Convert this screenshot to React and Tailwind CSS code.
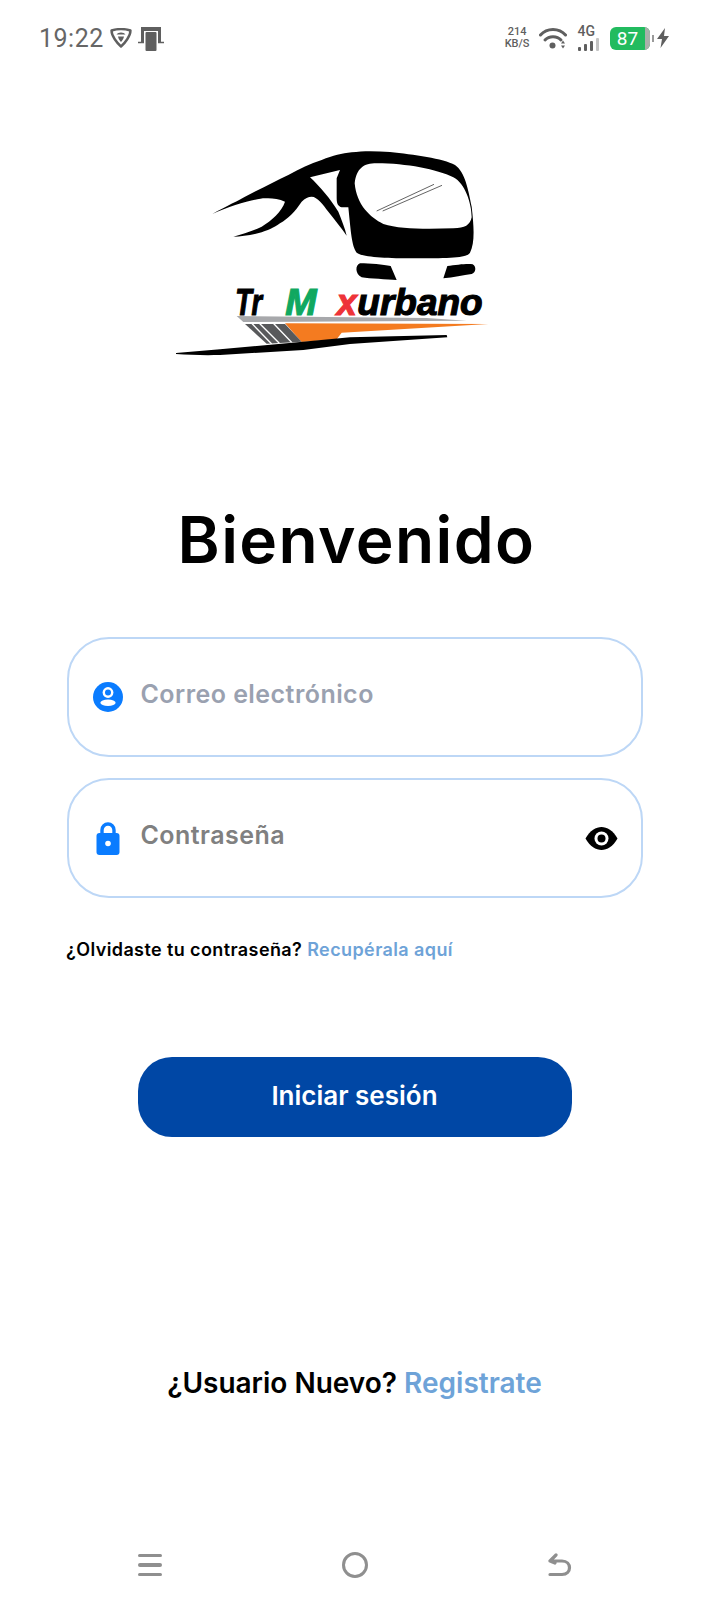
import { useId } from "react"

function ShieldIcon() {
  return (
    <svg width="22" height="20" viewBox="0 0 22 20" fill="none">
      <path d="M1.5 2.5 C7 0.8 15 0.8 20.5 2.5 C20.5 8 15 15 11 18.5 C7 15 1.5 8 1.5 2.5 Z" stroke="#5f5f5f" strokeWidth="2.4" strokeLinejoin="round" />
      <path d="M6.5 6.5 C8 3.8 14 3.8 15.5 6.5 Z M8 8.5 H14 C13.6 11 12 13 11 14 C10 13 8.4 11 8 8.5 Z" fill="#5f5f5f" />
    </svg>
  )
}

function DeviceIcon() {
  return (
    <svg width="26" height="25" viewBox="0 0 26 25" fill="none">
      <path d="M3 1 H23 V16 H20 V5 H6 V16 H3 Z" fill="#5f5f5f" />
      <rect x="7.5" y="6" width="11" height="19" rx="1" fill="#5f5f5f" />
      <path d="M0 16.5 H6 M20 16.5 H26" stroke="#5f5f5f" strokeWidth="1.5" />
    </svg>
  )
}

function WifiIcon() {
  return (
    <svg width="28" height="22" viewBox="0 0 28 22" fill="none">
      <path d="M1.5 8 C8 0.5 20 0.5 26.5 8" stroke="#5f5f5f" strokeWidth="3" strokeLinecap="round" />
      <path d="M6 13 C10 8.5 18 8.5 22 13" stroke="#5f5f5f" strokeWidth="3" strokeLinecap="round" />
      <circle cx="13.5" cy="18.5" r="3" fill="#5f5f5f" />
      <path d="M24 13.5 L26 16.5 H22 Z M24 21.5 L26 18.5 H22 Z" fill="#5f5f5f" />
    </svg>
  )
}

function SignalIcon() {
  return (
    <div className="flex flex-col items-start">
      <span className="text-[14px] leading-[11px] font-medium text-[#5f5f5f] font-['Roboto',sans-serif]">4G</span>
      <div className="flex items-end gap-[2.5px] h-[13px] mt-[1px]">
        <span className="w-[3.5px] h-[4px] bg-[#5f5f5f] rounded-[1px]" />
        <span className="w-[3.5px] h-[7px] bg-[#5f5f5f] rounded-[1px]" />
        <span className="w-[3.5px] h-[10px] bg-[#5f5f5f] rounded-[1px]" />
        <span className="w-[3.5px] h-[13px] bg-[#c4c4c4] rounded-[1px]" />
      </div>
    </div>
  )
}

function Battery() {
  return (
    <div className="flex items-center">
      <div className="flex items-center w-[40px] h-[23px] rounded-[6px] bg-[#22bb5f] overflow-hidden">
        <span className="flex-1 text-center text-white text-[19px] leading-none font-['Roboto',sans-serif]">87</span>
        <span className="w-[5px] h-full bg-[#a9b0aa]" />
      </div>
      <span className="ml-[2px] w-[2px] h-[7px] bg-[#9a9a9a]" />
      <svg className="ml-[2px]" width="14" height="20" viewBox="0 0 14 20">
        <path d="M9 0 L1 11 H6 L4.5 20 L13 8 H8 Z" fill="#5f5f5f" />
      </svg>
    </div>
  )
}

function StatusBar() {
  return (
    <div className="h-[76px] flex items-center justify-between pl-[39px] pr-[39px] font-['Roboto',sans-serif]">
      <div className="flex items-center">
        <span className="text-[25px] leading-none tracking-[0.5px] text-[#666666]">19:22</span>
        <span className="ml-[6px] flex"><ShieldIcon /></span>
        <span className="ml-[6px] flex"><DeviceIcon /></span>
      </div>
      <div className="flex items-center">
        <div className="flex flex-col items-center text-[11px] leading-[12px] font-medium text-[#5f5f5f]">
          <span>214</span>
          <span>KB/S</span>
        </div>
        <span className="ml-[9px] flex"><WifiIcon /></span>
        <span className="ml-[11px] flex"><SignalIcon /></span>
        <span className="ml-[11px] flex"><Battery /></span>
      </div>
    </div>
  )
}

// bus logo, traced in 3x coordinates
function Logo() {
  return (
    <svg className="ml-[160px] block" width="340" height="240" viewBox="0 0 1020 720">
      <path
        fill="#000"
        d="M157 252 C200 228 235 212 265 195 C310 172 350 152 385 135 C420 115 450 102 485 90 C520 76 545 70 575 67 C610 62 650 63 690 66 C760 74 850 85 885 105 C915 125 925 180 935 230 C942 290 945 340 930 368 C920 385 860 385 760 385 C680 385 610 382 590 368 C575 350 572 300 565 232 L545 232 C535 230 530 222 530 205 L530 145 L540 120 L450 142 C480 170 510 205 535 245 C545 270 555 295 560 317 C545 295 525 270 505 245 C490 225 472 200 455 200 C445 200 435 205 425 215 C405 245 385 265 360 280 C340 295 320 302 305 307 C275 315 245 319 220 320 C250 312 280 302 305 290 C335 272 365 245 375 215 C355 205 330 204 315 205 C290 205 215 225 157 252 Z"
      />
      <path
        fill="#fff"
        d="M584 160 C590 115 610 100 650 100 C740 100 830 118 880 142 C915 160 935 220 935 262 C930 285 915 295 880 295 C800 298 720 298 670 282 C630 262 590 225 584 160 Z"
      />
      <path d="M650 243 L822 163 M668 243 L846 166" stroke="#444" strokeWidth="2.5" />
      <path fill="#000" d="M600 400 C630 400 670 404 692 408 L710 450 C680 448 630 446 605 442 C585 432 585 405 600 400 Z" />
      <path fill="#000" d="M862 408 C890 404 925 400 938 403 C950 410 948 428 935 432 C910 436 880 442 850 445 Z" />
      <g fontFamily="'Liberation Sans', sans-serif" fontWeight="700" fontStyle="italic" fontSize="110" strokeWidth="3.5">
        <text x="226" y="555" fill="#000" stroke="#000" textLength="80" lengthAdjust="spacingAndGlyphs">Tr</text>
        <text x="376" y="555" fill="#10a860" stroke="#10a860" textLength="94" lengthAdjust="spacingAndGlyphs">M</text>
        <text x="530" y="555" fill="#ee3338" stroke="#ee3338" textLength="60" lengthAdjust="spacingAndGlyphs">x</text>
        <text x="592" y="555" fill="#000" stroke="#000" textLength="376" lengthAdjust="spacingAndGlyphs">urbano</text>
      </g>
      <path fill="#a7a8ab" d="M230 558 L800 564 L920 572 L250 576 Z" />
      <path fill="#f47b20" d="M375 580 L985 582 L545 608 L530 628 L425 636 Z" />
      <path fill="#58595b" d="M255 582 L375 582 L425 635 L320 641 Z" />
      <path stroke="#fff" strokeWidth="4" d="M275 580 L335 642 M298 580 L358 640 M340 580 L396 638" />
      <path fill="#000" d="M48 669 L180 658 L420 636 L570 622 L860 615 L862 622 L570 642 L430 660 L180 675 C130 676 90 675 48 672 Z" />
    </svg>
  )
}

function UserIcon() {
  const id = useId()
  return (
    <svg width="30" height="30" viewBox="0 0 30 30">
      <mask id={id}>
        <rect width="30" height="30" fill="#fff" />
        <circle cx="15" cy="10.5" r="5.4" fill="#000" />
        <ellipse cx="15" cy="20.8" rx="7.6" ry="3.2" fill="#000" />
      </mask>
      <circle cx="15" cy="15" r="15" fill="#0a7cff" mask={`url(#${id})`} />
      <circle cx="15" cy="10.5" r="3" fill="#0a7cff" />
    </svg>
  )
}

function LockIcon() {
  return (
    <svg width="24" height="33" viewBox="0 0 24 33">
      <path d="M6 13 V8 a6 6 0 0 1 12 0 V13" fill="none" stroke="#0a7cff" strokeWidth="3.4" />
      <rect x="0.5" y="11" width="23" height="22" rx="3" fill="#0a7cff" />
      <circle cx="12" cy="21.5" r="2.8" fill="#fff" />
    </svg>
  )
}

function EyeIcon() {
  return (
    <svg width="33" height="23" viewBox="0 0 33 23">
      <path d="M0.5 11.5 C5 3.5 11 0 16.5 0 S28 3.5 32.5 11.5 C28 19.5 22 23 16.5 23 S5 19.5 0.5 11.5 Z" fill="#000" />
      <circle cx="16.5" cy="11.5" r="7" fill="#fff" />
      <circle cx="16.5" cy="11.5" r="4" fill="#000" />
    </svg>
  )
}

function Field({ icon, label, color, right }) {
  return (
    <div className="h-[120px] rounded-[42px] border-[2.5px] border-[#bdd7f6] flex items-center pl-[21.5px] pr-[23px]">
      <span className="w-[34px] flex justify-center">{icon}</span>
      <span className={`ml-[16px] -mt-[6px] text-[25px] leading-[32px] font-semibold tracking-[0.45px] ${color}`}>{label}</span>
      {right && <span className="ml-auto flex">{right}</span>}
    </div>
  )
}

function NavBar() {
  return (
    <div className="flex items-center justify-between pl-[138px] pr-[137px] h-[26px]">
      <div className="flex flex-col gap-[6px] w-[24px]">
        <span className="h-[3.5px] rounded-full bg-[#8f8f8f]" />
        <span className="h-[3.5px] rounded-full bg-[#8f8f8f]" />
        <span className="h-[3.5px] rounded-full bg-[#8f8f8f]" />
      </div>
      <span className="w-[26px] h-[26px] rounded-full border-[3.5px] border-[#8f8f8f]" />
      <svg width="24" height="26" viewBox="0 0 24 26" fill="none">
        <path d="M2 22.5 H14 C24 22.5 24 9 14 9 H2 M8 3 L2 9 L7 11" stroke="#8f8f8f" strokeWidth="3.2" strokeLinecap="round" strokeLinejoin="round" />
      </svg>
    </div>
  )
}

export default function App() {
  return (
    <div className="w-[709px] h-[1600px] bg-white flex flex-col font-['Inter',sans-serif]">
      <StatusBar />
      <div className="mt-[54px]">
        <Logo />
      </div>
      <h1 className="mt-[134px] pl-[4px] text-center text-[64px] leading-[72px] font-semibold tracking-[1.4px] text-black">Bienvenido</h1>
      <div className="mt-[61px] mx-[67px] w-[576px] flex flex-col gap-[21px]">
        <Field
          icon={<UserIcon />}
          label="Correo electrónico"
          color="text-[#9aa1b0]"
        />
        <Field
          icon={<LockIcon />}
          label="Contraseña"
          color="text-[#808080]"
          right={<EyeIcon />}
        />
      </div>
      <p className="mt-[40px] ml-[66px] text-[18px] leading-[24px] font-semibold tracking-[0.4px] text-black">
        ¿Olvidaste tu contraseña? <span className="text-[#6ea3d8]">Recupérala aquí</span>
      </p>
      <button className="mt-[95px] pb-[4px] mx-auto w-[434px] h-[80px] rounded-[34px] bg-[#0047a5] text-white text-[26px] font-semibold">
        Iniciar sesión
      </button>
      <p className="mt-[227px] text-center text-[28px] leading-[38px] font-semibold text-black">
        ¿Usuario Nuevo? <span className="text-[#6ea3d8]">Registrate</span>
      </p>
      <div className="mt-[150px]">
        <NavBar />
      </div>
    </div>
  )
}
